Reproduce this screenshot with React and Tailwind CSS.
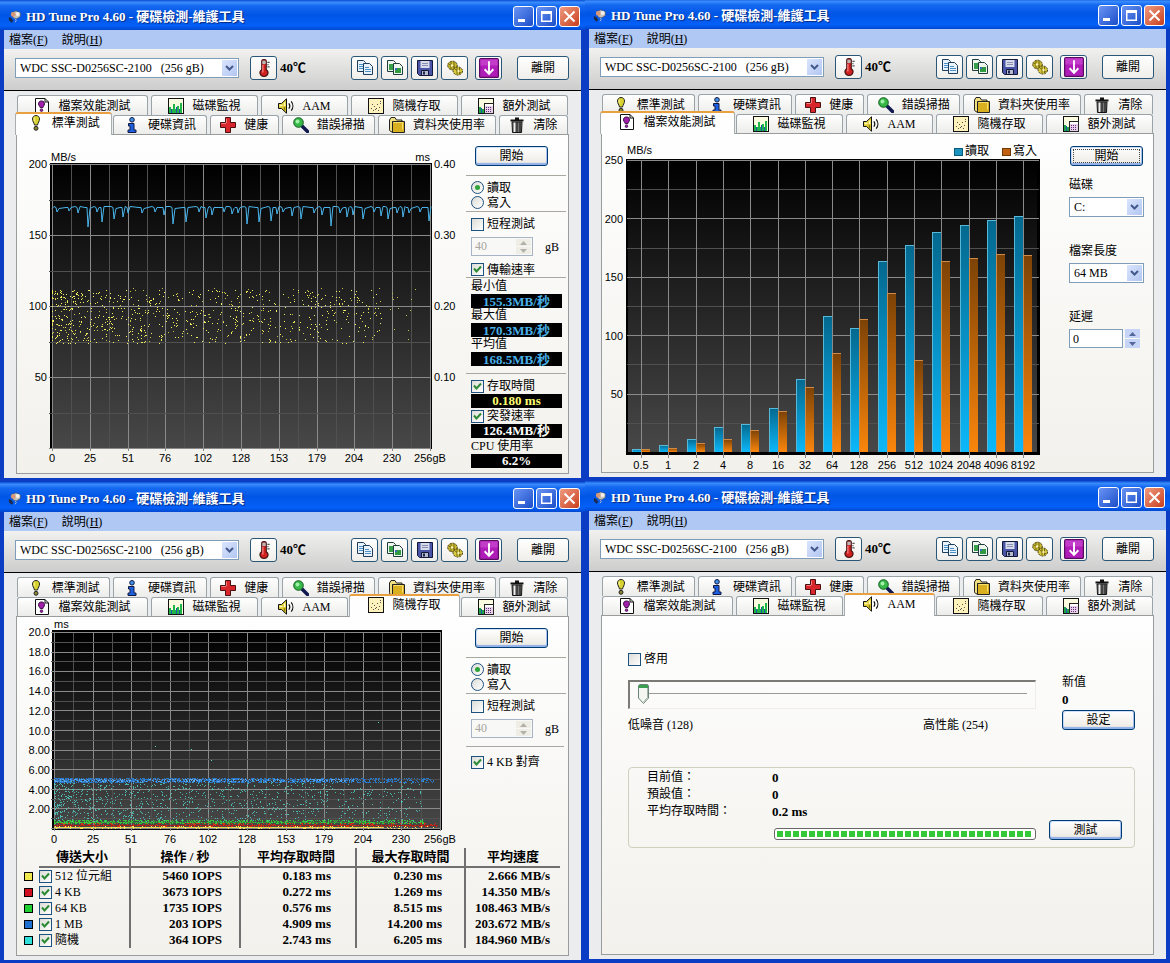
import { useState } from 'react';

const APP_TITLE = 'HD Tune Pro 4.60 - 硬碟檢測-維護工具';
const DRIVE = 'WDC SSC-D0256SC-2100\u00a0\u00a0\u00a0(256 gB)';
const CAPACITY_LABELS = ['0', '25', '51', '76', '102', '128', '153', '179', '204', '230', '256gB'];

// small seeded generator so that the plots look the same on every load
const createRandom = (seed) => {
  let state = seed;
  return () => {
    state = (state + 0x6d2b79f5) | 0;
    let t = Math.imul(state ^ (state >>> 15), 1 | state);
    t = (t + Math.imul(t ^ (t >>> 7), 61 | t)) ^ t;
    return ((t ^ (t >>> 14)) >>> 0) / 4294967296;
  };
};

const scatterPath = ({ seed, count, left, width, top, height, falloff = 1 }) => {
  const random = createRandom(seed);
  let d = '';
  for (let i = 0; i < count; i += 1) {
    const x = Math.floor(left + width * Math.pow(random(), falloff));
    const y = Math.floor(top + height * random());
    d += `M${x} ${y}h1v1h-1z`;
  }
  return d;
};

/* ---------- icons ---------- */

const Icon = ({ children, size = 'size-4' }) => (
  <svg viewBox="0 0 16 16" className={`${size} shrink-0`} aria-hidden="true">
    {children}
  </svg>
);

const BenchmarkIcon = () => (
  <Icon>
    <path d="M8 .5c2.200 0 3.500 1.500 3.500 3.500 0 2.500-1.500 3.500-2 6H6.500c-.5-2.500-2-3.500-2-6C4.500 2 5.800.500 8 .500z" fill="#d8d230" stroke="#222" />
    <path d="M6.500 2.500c-.7 1-.5 2.500.3 4" stroke="#ffffb0" fill="none" />
    <circle cx="8" cy="13.300" r="2" fill="#8a8630" stroke="#222" />
  </Icon>
);

const InfoIcon = () => (
  <Icon>
    <circle cx="8" cy="2.800" r="2.300" fill="#3f8fe8" stroke="#101840" />
    <path d="M4.500 6.500h5.500v6.500h2v2.500h-8V13H6V9H4.500z" fill="#1c5fe0" stroke="#101840" />
  </Icon>
);

const HealthIcon = () => (
  <Icon>
    <path d="M5.500.500h5v5h5v5h-5v5h-5v-5h-5v-5h5z" fill="#d8262c" stroke="#4a1010" />
    <path d="M6.500 6V1.800M1.500 6.500h4.500" stroke="#f58080" />
  </Icon>
);

const ScanIcon = () => (
  <Icon>
    <path d="M9 9l5.500 5.500" stroke="#101850" strokeWidth="3.500" strokeLinecap="round" />
    <circle cx="5.500" cy="5.500" r="4.800" fill="#38b848" stroke="#145c20" />
    <circle cx="4.500" cy="4.500" r="2" fill="#a0f0a8" />
  </Icon>
);

const FolderIcon = () => (
  <Icon>
    <path d="M.5 13.500V3l1.500-2.500h4L7.500 3H13v2" fill="#f0e080" stroke="#222" />
    <path d="M.5 13.500l3 2v-11" fill="#f0e080" stroke="#222" />
    <path d="M3.500 4.500h12v11h-12z" fill="#d8b020" stroke="#222" />
    <path d="M4.500 5.500h9v7" fill="none" stroke="#f8e070" />
  </Icon>
);

const TrashIcon = () => (
  <Icon>
    <path d="M6 1.500h4M1.500 3.500h13" stroke="#111" strokeWidth="2" />
    <path d="M3 5h10l-.5 10.500h-9z" fill="#777" stroke="#111" />
    <path d="M5.500 5.500v9.500" stroke="#eee" strokeWidth="1.500" />
    <path d="M8 5.500v9.500M11 5.500v9.500" stroke="#222" strokeWidth="1.200" />
  </Icon>
);

const FileBenchIcon = () => (
  <Icon>
    <path d="M1.500.500h9.500l3.500 3.500v11.500h-13z" fill="#fff" stroke="#111" />
    <path d="M11 .5V4h3.500" fill="none" stroke="#111" />
    <path d="M7.500 3c2 0 3 1.200 3 2.700 0 1.800-1.200 2.300-1.700 4H6.300c-.5-1.700-1.800-2.200-1.800-4C4.500 4.200 5.500 3 7.500 3z" fill="#a01fa8" stroke="#30083a" />
    <circle cx="7.500" cy="12.200" r="1.300" fill="#a01fa8" stroke="#30083a" strokeWidth=".7" />
  </Icon>
);

const MonitorIcon = () => (
  <Icon>
    <rect x=".5" y=".5" width="15" height="15" fill="#fbfbdf" stroke="#111" />
    <path d="M1 15V9h2v2h2V6h2v5h2V8h2v3h1V5h2v10z" fill="#1fb548" />
    <path d="M3 11h1v4H3zM8 9h1v6H8zM11 11h1v4h-1z" fill="#1e56a8" />
  </Icon>
);

const SpeakerIcon = () => (
  <Icon>
    <path d="M.5 5.500h3L8.500.800v14.400l-5-4.700h-3z" fill="#e0cc30" stroke="#111" />
    <path d="M1.500 7.500h3M6.500 4.500v3.500" stroke="#fffbc0" strokeWidth="1.500" />
    <path d="M6.500 9v3.500" stroke="#8a7a10" strokeWidth="1.500" />
    <path d="M10.800 5.300c1.200 1.600 1.200 3.800 0 5.400M13.200 3.300c2.200 2.700 2.200 6.700 0 9.400" fill="none" stroke="#111" strokeWidth="1.200" />
  </Icon>
);

const RandomIcon = () => (
  <Icon>
    <rect x=".5" y=".5" width="15" height="15" fill="#fdf2bc" stroke="#111" />
    <path d="M3 10h1v1H3zM5 12h1v1H5zM6 8h1v1H6zM8 10h1v1H8zM9 6h1v1H9zM11 9h1v1h-1zM12 5h1v1h-1zM4 6h1v1H4zM12 3h1v1h-1zM10 12h1v1h-1zM7 11h1v1H7z" fill="#555" />
  </Icon>
);

const ExtraIcon = () => (
  <Icon>
    <rect x=".5" y=".5" width="15" height="15" fill="#fbfbdf" stroke="#111" />
    <path d="M1 9h2v6H1zM4 11h2v4H4z" fill="#1fa548" />
    <path d="M3 10h1v5H3z" fill="#1e56a8" />
    <rect x="6.500" y="5.500" width="9" height="10" fill="#e8d0e8" stroke="#222" />
    <path d="M7 6h8v2H7z" fill="#fff" />
    <path d="M8 9h1v1H8zM10 9h1v1h-1zM12 9h1v1h-1zM8 11h1v1H8zM10 11h1v1h-1zM12 11h1v1h-1zM8 13h1v1H8zM10 13h1v1h-1zM12 13h1v1h-1z" fill="#603080" />
  </Icon>
);

const ThermometerIcon = () => (
  <Icon size="size-[18px]">
    <path d="M6 9.500V2c0-2 4-2 4 0v7.500c3 2 1.500 6-2 6s-5-4-2-6z" fill="#d02020" stroke="#401010" />
    <path d="M6.500 1.500h3v3h-3z" fill="#b8b8b8" />
    <path d="M7 5v7" stroke="#ff9090" />
    <path d="M11 3h2M11 5h1M11 7h2" stroke="#555" />
  </Icon>
);

const CopyTextIcon = () => (
  <Icon>
    <path d="M.5.500h6l2 2v9h-8z" fill="#eaf3fb" stroke="#1d3d5c" />
    <path d="M2 4.500h5M2 6.500h5M2 8.500h5" stroke="#4a90c8" />
    <path d="M6.500 3.500h6l3 3v8h-9z" fill="#eaf3fb" stroke="#1d3d5c" />
    <path d="M8 7.500h4M8 9.500h6M8 11.500h6" stroke="#4a90c8" />
  </Icon>
);

const CopyImageIcon = () => (
  <Icon>
    <path d="M.5.500h6l2 2v9h-8z" fill="#eef6ee" stroke="#1d3d3c" />
    <path d="M2 4h4v6H2z" fill="#38a048" />
    <path d="M6.500 3.500h6l3 3v8h-9z" fill="#eef6ee" stroke="#1d3d3c" />
    <path d="M8 8h6v5H8z" fill="#2f9a40" />
    <path d="M8 8h2v2H8z" fill="#3868c0" />
  </Icon>
);

const SaveIcon = () => (
  <Icon>
    <path d="M.5.500h15v15h-13l-2-2z" fill="#4a55a8" stroke="#141838" />
    <path d="M3.500 1h9v7h-9z" fill="#d8dcea" />
    <path d="M5 3.500h6M5 5.500h6" stroke="#8a90b0" />
    <path d="M4.500 10.500h7v5h-7z" fill="#b8bcd0" stroke="#141838" />
    <path d="M6 11.500h2v3H6z" fill="#20264e" />
  </Icon>
);

const OptionsIcon = () => (
  <Icon>
    <ellipse cx="5.500" cy="5.500" rx="4.800" ry="4.300" fill="#c8b830" stroke="#3a3408" strokeDasharray="2 1" />
    <path d="M1.500 4L9 8M4 1v9M7 2v8" stroke="#756a14" />
    <ellipse cx="10.800" cy="11" rx="4.700" ry="4" fill="#d8c83c" stroke="#3a3408" strokeDasharray="2 1" />
    <path d="M8 9l6 4M10 8v6M12.500 8v6" stroke="#756a14" />
    <circle cx="5" cy="5.500" r="1.200" fill="#fff6b0" />
    <circle cx="11.500" cy="11" r="1.200" fill="#fff6b0" />
  </Icon>
);

const UpdateIcon = () => (
  <Icon size="size-5">
    <rect x=".5" y=".5" width="15" height="15" rx="1" fill="#b01cb8" stroke="#5a0a60" />
    <path d="M1 1h14v5H1z" fill="#cf50d4" opacity=".6" />
    <path d="M8 2.500v10M4.500 9L8 12.700 11.500 9" fill="none" stroke="#fff" strokeWidth="1.500" />
  </Icon>
);

const AppIcon = () => (
  <Icon size="size-3.5">
    <path d="M4 3l5-2 5 2v4.500l-4 2.500-4-1z" fill="#c8c4bc" stroke="#555" strokeWidth=".6" />
    <circle cx="11" cy="4.500" r="2.300" fill="#f4f0ea" />
    <circle cx="6" cy="5" r="2.700" fill="#d89878" />
    <path d="M1 8l3 1.500 2 3-2 2-3-3z" fill="#1a2a48" />
    <path d="M8 10l1.500 2-1.500 2" stroke="#c8c8c8" fill="none" />
  </Icon>
);

/* ---------- controls ---------- */

const Chevron = () => (
  <svg viewBox="0 0 9 6" className="h-1.5 w-[9px]" aria-hidden="true">
    <path d="M1 1l3.500 3.500L8 1" fill="none" stroke="#43598c" strokeWidth="2" />
  </svg>
);

const Select = ({ label, options, className }) => (
  <div className={`relative ${className}`}>
    <select
      aria-label={label}
      className="h-full w-full appearance-none border border-[#7f9db9] bg-white pl-1 text-black outline-none"
    >
      {options.map((option) => (
        <option key={option}>{option}</option>
      ))}
    </select>
    <span className="pointer-events-none absolute inset-y-0.5 right-0.5 flex w-[15px] items-center justify-center bg-linear-to-br from-[#dbe5fd] to-[#b2c6f2]">
      <Chevron />
    </span>
  </div>
);

const Button = ({ children, focused = false }) => (
  <button
    type="button"
    className={`flex h-5 w-[73px] items-center justify-center rounded-[3px] border border-[#003c74] bg-linear-to-b from-white to-[#ece9e2] shadow-[inset_0_-2px_1px_#8fb0e8,inset_1px_1px_0_#cfe0fb,inset_-1px_0_0_#a8c2ef] ${focused ? 'outline-1 -outline-offset-4 outline-dotted outline-[#444]' : ''}`}
  >
    {children}
  </button>
);

const ToolButton = ({ label, children }) => (
  <button
    type="button"
    aria-label={label}
    className="flex h-6 w-[27px] items-center justify-center rounded-[3px] border border-[#2a5678] bg-linear-to-b from-white to-[#efeeea]"
  >
    {children}
  </button>
);

const Checkbox = ({ label, defaultChecked = false }) => (
  <label className="flex items-center gap-[3px] whitespace-nowrap">
    <span className="relative size-[13px] shrink-0">
      <input
        type="checkbox"
        defaultChecked={defaultChecked}
        className="peer block size-[13px] appearance-none border border-[#1c5180] bg-linear-to-br from-[#dcdcd7] to-white"
      />
      <svg viewBox="0 0 13 13" className="pointer-events-none absolute inset-0 hidden size-[13px] peer-checked:block" aria-hidden="true">
        <path d="M3 5.500l2.500 3L10 3.500" fill="none" stroke="#2c8a34" strokeWidth="2" />
      </svg>
    </span>
    {label}
  </label>
);

const Radio = ({ name, label, defaultChecked = false }) => (
  <label className="flex h-[15px] items-center gap-[3px]">
    <span className="relative size-[13px] shrink-0">
      <input
        type="radio"
        name={name}
        defaultChecked={defaultChecked}
        className="peer block size-[13px] appearance-none rounded-full border border-[#1c5180] bg-linear-to-br from-[#dcdcd7] to-white"
      />
      <span className="pointer-events-none absolute inset-1 hidden rounded-full bg-[#2fa43a] peer-checked:block" />
    </span>
    {label}
  </label>
);

const SpinArrows = ({ className, disabled = false }) => (
  <span className={`flex w-[15px] flex-col gap-px ${className}`}>
    <button type="button" disabled={disabled} aria-label="Up" className="flex flex-1 items-center justify-center bg-[#c6d4f8] disabled:bg-[#eeede6]">
      <svg viewBox="0 0 7 4" className="h-1 w-[7px]">
        <path d="M0 4l3.500-4L7 4z" fill="currentColor" />
      </svg>
    </button>
    <button type="button" disabled={disabled} aria-label="Down" className="flex flex-1 items-center justify-center bg-[#c6d4f8] disabled:bg-[#eeede6]">
      <svg viewBox="0 0 7 4" className="h-1 w-[7px]">
        <path d="M0 0l3.500 4L7 0z" fill="currentColor" />
      </svg>
    </button>
  </span>
);

const Rule = ({ className = '' }) => <hr className={`border-t border-[#a9a8a0] ${className}`} />;

/* ---------- window frame ---------- */

const BASIC_TABS = [
  { id: 'benchmark', label: '標準測試', icon: BenchmarkIcon },
  { id: 'info', label: '硬碟資訊', icon: InfoIcon },
  { id: 'health', label: '健康', icon: HealthIcon },
  { id: 'scan', label: '錯誤掃描', icon: ScanIcon },
  { id: 'folder', label: '資料夾使用率', icon: FolderIcon },
  { id: 'erase', label: '清除', icon: TrashIcon },
];

const EXTRA_TABS = [
  { id: 'file', label: '檔案效能測試', icon: FileBenchIcon },
  { id: 'monitor', label: '磁碟監視', icon: MonitorIcon },
  { id: 'aam', label: 'AAM', icon: SpeakerIcon },
  { id: 'random', label: '隨機存取', icon: RandomIcon },
  { id: 'extra', label: '額外測試', icon: ExtraIcon },
];

const TabRow = ({ tabs, active, height }) => (
  <div role="tablist" className={`flex gap-[3px] ${height}`}>
    {tabs.map(({ id, label, icon: TabIcon }) => {
      const selected = id === active;
      return (
        <button
          key={id}
          type="button"
          role="tab"
          aria-selected={selected}
          className={
            selected
              ? "relative isolate z-10 flex flex-auto items-center justify-center gap-2 px-px pb-1 before:absolute before:-inset-x-0.5 before:-top-[3px] before:-bottom-px before:-z-10 before:rounded-t-[3px] before:border-x before:border-t-2 before:border-x-[#a8aeb0] before:border-t-[#e8a040] before:bg-[#fefefe] before:content-['']"
              : 'flex flex-auto items-center justify-center gap-2 rounded-t-[3px] border-x border-t border-[#9aa4a8] bg-linear-to-b from-white to-[#ececea]'
          }
        >
          <TabIcon />
          {label}
        </button>
      );
    })}
  </div>
);

const CaptionButton = ({ label, close = false, children }) => (
  <button
    type="button"
    aria-label={label}
    className={`size-[21px] rounded-[3px] border border-white ${close ? 'bg-linear-to-br from-[#ee9a80] to-[#c83c18]' : 'bg-linear-to-br from-[#6a94f4] to-[#1a4cc8]'}`}
  >
    <svg viewBox="0 0 19 19" className="size-[19px]">
      {children}
    </svg>
  </button>
);

const Window = ({ active, children }) => {
  const rows = BASIC_TABS.some((tab) => tab.id === active) ? [EXTRA_TABS, BASIC_TABS] : [BASIC_TABS, EXTRA_TABS];

  return (
    <section className="flex flex-col bg-[#0a3cc4]">
      <header className="flex h-[30px] items-center bg-[linear-gradient(#0a4fd6_0%,#3a8cfc_8%,#1468f0_20%,#0055e5_50%,#0460f8_85%,#0048d0_100%)] pt-[3px] pr-[5px] pl-2">
        <AppIcon />
        <h2 className="ml-1 text-[13px] font-bold whitespace-nowrap text-white [text-shadow:1px_1px_1px_#06287c]">{APP_TITLE}</h2>
        <div className="ml-auto flex gap-0.5">
          <CaptionButton label="Minimize">
            <path d="M4 12h7v3H4z" fill="#fff" />
          </CaptionButton>
          <CaptionButton label="Maximize">
            <path d="M4 4h11v11H4zM5.500 7v6.500h8V7z" fill="#fff" fillRule="evenodd" />
          </CaptionButton>
          <CaptionButton label="Close" close>
            <path d="M4.500 4.500l10 10M14.500 4.500l-10 10" stroke="#fff" strokeWidth="2" />
          </CaptionButton>
        </div>
      </header>

      <div className="mx-1 mb-1 flex-1 bg-[#ebecee]">
        <nav className="flex h-[19px] items-center gap-3.5 bg-[#b0c8f4] pl-[5px]">
          <a href="#file">
            檔案(<u>F</u>)
          </a>
          <a href="#help">
            說明(<u>H</u>)
          </a>
        </nav>

        <div className="flex h-[42px] items-center border-b border-black bg-linear-to-b from-[#f1f1ef] to-[#cdcdcd] pr-3 pb-[3px] pl-[11px]">
          <Select label="Drive" options={[DRIVE]} className="h-5 w-56" />
          <div className="ml-[11px] flex items-center gap-[3px]">
            <ToolButton label="Temperature">
              <ThermometerIcon />
            </ToolButton>
            <span className="text-[13px] font-bold">40℃</span>
          </div>
          <div className="ml-auto flex gap-[3px]">
            <ToolButton label="Copy text">
              <CopyTextIcon />
            </ToolButton>
            <ToolButton label="Copy screenshot">
              <CopyImageIcon />
            </ToolButton>
            <ToolButton label="Save">
              <SaveIcon />
            </ToolButton>
            <ToolButton label="Options">
              <OptionsIcon />
            </ToolButton>
          </div>
          <div className="ml-[7px] flex gap-[15px]">
            <ToolButton label="Update">
              <UpdateIcon />
            </ToolButton>
            <button
              type="button"
              className="h-6 w-[52px] rounded-[3px] border border-[#2a5678] bg-linear-to-b from-white to-[#efeeea]"
            >
              離開
            </button>
          </div>
        </div>

        <div className="px-3 pt-1 pb-1">
          <div className="px-px">
            <TabRow tabs={rows[0]} active={active} height="h-5" />
            <TabRow tabs={rows[1]} active={active} height="h-[19px]" />
          </div>
          <div className="min-h-[340px] border border-[#989c9c] bg-linear-to-b from-[#fefefe] to-[#f2f1ec]">{children}</div>
        </div>
      </div>
    </section>
  );
};

/* ---------- charts ---------- */

const PlotGradient = ({ id }) => (
  <linearGradient id={id} x1="0" y1="0" x2="0" y2="1">
    <stop offset="0" stopColor="#000" />
    <stop offset="1" stopColor="#484848" />
  </linearGradient>
);

const Grid = ({ left, top, width, height, columns, rows }) => (
  <g shapeRendering="crispEdges">
    {Array.from({ length: columns * 2 + 1 }, (_, i) => {
      const x = Math.round(left + (width * i) / (columns * 2)) + 0.5;
      return <path key={`c${i}`} d={`M${x} ${top}v${height + (i % 2 ? 0 : 3)}`} stroke={i % 2 ? '#505050' : '#8a8a8a'} />;
    })}
    {Array.from({ length: rows * 2 + 1 }, (_, i) => {
      const y = Math.round(top + (height * i) / (rows * 2)) + 0.5;
      return <path key={`r${i}`} d={`M${left - 3} ${y}h${width + 3}`} stroke={i % 2 ? '#505050' : '#8a8a8a'} />;
    })}
  </g>
);

const DIPS = [
  [5, 5], [17, 4], [26, 6], [36, 20], [45, 5], [50, 15], [62, 12], [71, 10], [76, 6], [90, 6], [103, 5], [112, 8],
  [121, 17], [134, 15], [147, 5], [154, 11], [160, 8], [172, 5], [180, 7], [186, 6], [195, 17], [207, 15], [219, 14],
  [225, 7], [231, 5], [240, 9], [249, 12], [262, 6], [270, 8], [279, 19], [288, 6], [295, 10], [301, 8], [311, 12],
  [322, 5], [329, 9], [336, 12], [345, 6], [351, 10], [357, 6], [368, 5], [377, 14],
];

const transferPath = () => {
  let d = 'M35 61.500';
  DIPS.forEach(([x, depth], i) => {
    const px = 35 + x;
    d += `L${px - 3} ${59.5 + (i % 2)}L${px - 1} ${60.5}L${px} ${60 + depth}L${px + 2} ${61.5 - (i % 3)}`;
  });
  return d;
};

const TransferChart = () => (
  <svg viewBox="0 0 446 324" className="h-[324px] w-[446px] shrink-0 font-['Liberation_Sans',sans-serif] text-[11px]" role="img">
    <defs>
      <PlotGradient id="transferPlot" />
    </defs>
    <rect x="33" y="16" width="382" height="286" fill="#000" />
    <rect x="35" y="17" width="379" height="284" fill="url(#transferPlot)" />
    <Grid left={35} top={17} width={378} height={284} columns={10} rows={4} />
    <path d={scatterPath({ seed: 11, count: 660, left: 35, width: 330, top: 143, height: 54, falloff: 1.5 })} fill="#f4f060" />
    <path d={scatterPath({ seed: 23, count: 200, left: 35, width: 366, top: 141, height: 54, falloff: 1.2 })} fill="#c4c048" />
    <path d={transferPath()} fill="none" stroke="#4ab4ea" />
    <text x="34" y="14">MB/s</text>
    <text x="413" y="14" textAnchor="end">ms</text>
    {['200', '150', '100', '50'].map((label, i) => (
      <text key={label} x="30" y={21 + 71 * i} textAnchor="end">
        {label}
      </text>
    ))}
    {['0.40', '0.30', '0.20', '0.10'].map((label, i) => (
      <text key={label} x="417" y={21 + 71 * i}>
        {label}
      </text>
    ))}
    {CAPACITY_LABELS.map((label, i) => (
      <text key={label} x={35 + Math.round(37.8 * i)} y="315" textAnchor="middle">
        {label}
      </text>
    ))}
  </svg>
);

const BLOCK_RESULTS = [
  { size: '0.5', read: 3, write: 3 },
  { size: '1', read: 7, write: 4 },
  { size: '2', read: 13, write: 9 },
  { size: '4', read: 25, write: 13 },
  { size: '8', read: 28, write: 22 },
  { size: '16', read: 44, write: 41 },
  { size: '32', read: 73, write: 65 },
  { size: '64', read: 136, write: 99 },
  { size: '128', read: 124, write: 133 },
  { size: '256', read: 191, write: 159 },
  { size: '512', read: 207, write: 92 },
  { size: '1024', read: 220, write: 191 },
  { size: '2048', read: 227, write: 194 },
  { size: '4096', read: 232, write: 198 },
  { size: '8192', read: 236, write: 197 },
];

const Bar = ({ x, height, fill, edge }) => (
  <g shapeRendering="crispEdges">
    <rect x={x} y={318 - height} width="9" height={height} fill={`url(#${fill})`} />
    <path d={`M${x + 0.5} 318v-${height - 0.5}h8`} fill="none" stroke={edge} />
  </g>
);

const FileChart = () => (
  <svg viewBox="0 0 446 338" className="h-[338px] w-[446px] shrink-0 font-['Liberation_Sans',sans-serif] text-[11px]" role="img">
    <defs>
      <PlotGradient id="filePlot" />
      <linearGradient id="readBar" x1="0" y1="0" x2="0" y2="1">
        <stop offset="0" stopColor="#04688e" />
        <stop offset="1" stopColor="#0cb8fa" />
      </linearGradient>
      <linearGradient id="writeBar" x1="0" y1="0" x2="0" y2="1">
        <stop offset="0" stopColor="#7c4206" />
        <stop offset="1" stopColor="#fb860c" />
      </linearGradient>
    </defs>
    <rect x="24" y="25" width="414" height="296" fill="#000" />
    <rect x="26" y="27" width="409" height="291" fill="url(#filePlot)" />
    <g shapeRendering="crispEdges">
      {Array.from({ length: 10 }, (_, i) => {
        const y = Math.round(26 + 29.2 * i) + 0.5;
        return <path key={i} d={`M25 ${y}h412`} stroke={i % 2 ? '#505050' : '#8a8a8a'} />;
      })}
      {BLOCK_RESULTS.map(({ size }, i) => (
        <path key={size} d={`M${Math.round(39 + 27.3 * i) + 0.5} 27v297`} stroke="#8a8a8a" />
      ))}
    </g>
    {BLOCK_RESULTS.map(({ size, read, write }, i) => {
      const x = Math.round(39 + 27.3 * i);
      return (
        <g key={size}>
          <Bar x={x - 9} height={read} fill="readBar" edge="#58b8d8" />
          <Bar x={x} height={write} fill="writeBar" edge="#d08a48" />
          <text x={x} y="335" textAnchor="middle">
            {size}
          </text>
        </g>
      );
    })}
    <text x="25" y="20">MB/s</text>
    {['250', '200', '150', '100', '50'].map((label, i) => (
      <text key={label} x="21" y={30 + Math.round(58.5 * i)} textAnchor="end">
        {label}
      </text>
    ))}
    <rect x="352.500" y="14.500" width="8" height="7" fill="#1c94c0" stroke="#0a5878" />
    <rect x="400.500" y="14.500" width="8" height="7" fill="#c06010" stroke="#6e3808" />
    <g className="font-['Noto_Sans_CJK_TC',sans-serif] text-xs">
      <text x="363" y="21">讀取</text>
      <text x="411" y="21">寫入</text>
    </g>
  </svg>
);

const RandomChart = () => (
  <svg viewBox="0 0 446 231" className="h-[231px] w-[446px] shrink-0 font-['Liberation_Sans',sans-serif] text-[11px]" role="img">
    <defs>
      <PlotGradient id="randomPlot" />
    </defs>
    <rect x="35" y="13" width="390" height="200" fill="#000" />
    <rect x="37" y="14" width="386" height="197" fill="url(#randomPlot)" />
    <Grid left={37} top={15} width={386} height={196} columns={10} rows={10} />
    <path d={scatterPath({ seed: 5, count: 1150, left: 37, width: 370, top: 164, height: 42, falloff: 1.5 })} fill="#4fd8cc" opacity=".8" />
    <path d={scatterPath({ seed: 7, count: 1500, left: 37, width: 380, top: 161, height: 5, falloff: 1.4 })} fill="#2c78c8" />
    <path d={scatterPath({ seed: 17, count: 300, left: 37, width: 300, top: 162, height: 3, falloff: 1.3 })} fill="#58a8f0" />
    <path d="M37 205.500h340" stroke="#2f8a34" />
    <path d={scatterPath({ seed: 9, count: 700, left: 37, width: 370, top: 203, height: 4, falloff: 1.2 })} fill="#38c840" />
    <path d="M37 208.500h384" stroke="#a02018" />
    <path d={scatterPath({ seed: 13, count: 400, left: 37, width: 384, top: 206, height: 4 })} fill="#d83018" />
    <path d="M37 210.500h330" stroke="#e8d850" />
    <path d={scatterPath({ seed: 31, count: 160, left: 37, width: 384, top: 209, height: 3 })} fill="#ffe860" />
    <path d="M138 129h1v1h-1zM174 132h1v1h-1zM194 143h1v1h-1zM361 105h1v1h-1z" fill="#4fd8cc" />
    <text x="37" y="11">ms</text>
    {['20.0', '18.0', '16.0', '14.0', '12.0', '10.0', '8.00', '6.00', '4.00', '2.00'].map((label, i) => (
      <text key={label} x="33" y={19 + Math.round(19.7 * i)} textAnchor="end">
        {label}
      </text>
    ))}
    {CAPACITY_LABELS.map((label, i) => (
      <text key={label} x={37 + Math.round(38.6 * i)} y="226" textAnchor="middle">
        {label}
      </text>
    ))}
  </svg>
);

/* ---------- pages ---------- */

// start button, read/write choice and short stroke, shared by the two drive tests
const TestOptions = ({ name, children }) => (
  <div className="mr-0.5 ml-[3px] flex-1 pt-[11px]">
    <div className="pl-[9px]">
      <Button>開始</Button>
    </div>
    <Rule className="mt-[9px]" />
    <div className="mt-1 pl-[5px]">
      <Radio name={name} label="讀取" defaultChecked />
      <Radio name={name} label="寫入" />
    </div>
    <Rule className="mt-px" />
    <div className="mt-1 pl-[5px]">
      <Checkbox label="短程測試" />
      <div className="mt-[5px] flex items-center gap-3">
        <span className="relative">
          <input
            type="text"
            aria-label="短程測試 gB"
            disabled
            defaultValue="40"
            className="block h-[19px] w-[62px] border border-[#a8b4c4] bg-[#f8f8f6] pl-[3px] text-[#a8a69c]"
          />
          <SpinArrows disabled className="absolute inset-y-0.5 right-0.5 text-[#b4b2a8]" />
        </span>
        gB
      </div>
    </div>
    {children}
  </div>
);

const Reading = ({ children, color = 'text-white' }) => (
  <output className={`mr-1 flex h-3.5 items-center justify-center bg-black text-[13px] font-bold whitespace-nowrap ${color}`}>
    {children}
  </output>
);

const BenchmarkPage = () => (
  <div className="flex items-end">
    <TransferChart />
    <div className="flex flex-1">
      <TestOptions name="benchmarkMode">
        <div className="mt-1.5 flex h-[15px] items-center pl-[5px]">
          <Checkbox label="傳輸速率" defaultChecked />
        </div>
        <Rule />
        <div className="pt-px pl-[5px] leading-[15px]">
          <p>最小值</p>
          <Reading color="text-[#48b0e8]">155.3MB/秒</Reading>
          <p>最大值</p>
          <Reading color="text-[#48b0e8]">170.3MB/秒</Reading>
          <p>平均值</p>
          <Reading color="text-[#48b0e8]">168.5MB/秒</Reading>
        </div>
        <Rule className="mt-[7px]" />
        <div className="mt-1 pl-[5px]">
          <Checkbox label="存取時間" defaultChecked />
          <Reading color="text-[#ffff70]">0.180 ms</Reading>
          <Checkbox label="突發速率" defaultChecked />
          <Reading>126.4MB/秒</Reading>
          <p>CPU 使用率</p>
          <Reading>6.2%</Reading>
        </div>
        <div className="h-[3px]" />
      </TestOptions>
    </div>
  </div>
);

const FilePage = () => (
  <div className="flex">
    <FileChart />
    <div className="flex flex-col gap-[26px] pt-3 pl-[21px]">
      <div className="pl-px">
        <Button focused>開始</Button>
      </div>
      <div className="-mt-[15px]">
        <p>磁碟</p>
        <Select label="磁碟" options={['C:']} className="mt-1 h-5 w-[75px]" />
      </div>
      <div>
        <p>檔案長度</p>
        <Select label="檔案長度" options={['64 MB']} className="mt-1 h-5 w-[75px]" />
      </div>
      <div>
        <label htmlFor="delay">延遲</label>
        <div className="mt-1 flex h-[19px] gap-0.5">
          <input id="delay" type="text" defaultValue="0" className="w-[54px] border border-[#7f9db9] bg-white pl-[3px] outline-none" />
          <SpinArrows className="text-[#54689c]" />
        </div>
      </div>
    </div>
  </div>
);

const ACCESS_RESULTS = [
  { name: '512 位元組', color: 'bg-[#f0e84c]', iops: '5460 IOPS', average: '0.183 ms', max: '0.230 ms', speed: '2.666 MB/s' },
  { name: '4 KB', color: 'bg-[#d01020]', iops: '3673 IOPS', average: '0.272 ms', max: '1.269 ms', speed: '14.350 MB/s' },
  { name: '64 KB', color: 'bg-[#20d030]', iops: '1735 IOPS', average: '0.576 ms', max: '8.515 ms', speed: '108.463 MB/s' },
  { name: '1 MB', color: 'bg-[#2070d0]', iops: '203 IOPS', average: '4.909 ms', max: '14.200 ms', speed: '203.672 MB/s' },
  { name: '隨機', color: 'bg-[#30e0d8]', iops: '364 IOPS', average: '2.743 ms', max: '6.205 ms', speed: '184.960 MB/s' },
];

const RandomPage = () => (
  <>
    <div className="flex">
      <RandomChart />
      <TestOptions name="randomMode">
        <Rule className="mt-2 mr-0.5" />
        <div className="mt-[7px] pl-[5px]">
          <Checkbox label="4 KB 對齊" defaultChecked />
        </div>
      </TestOptions>
    </div>
    <table className="mr-2 ml-[7px] w-[536px] table-fixed border-separate border-spacing-0 text-[13px] font-bold">
      <colgroup>
        <col className="w-[15px]" />
        <col className="w-[90px]" />
        <col className="w-[110px]" />
        <col className="w-[116px]" />
        <col className="w-[109px]" />
        <col />
      </colgroup>
      <thead>
        <tr className="h-5 [&>th]:border-[#707070]">
          <td />
          <th className="border-b-2 pr-1">傳送大小</th>
          <th className="border-b-2 border-l-2">操作 / 秒</th>
          <th className="border-b-2 border-l-2 pr-1">平均存取時間</th>
          <th className="border-b-2 border-l-2">最大存取時間</th>
          <th className="border-b-2 border-l-2">平均速度</th>
        </tr>
      </thead>
      <tbody>
        {ACCESS_RESULTS.map((row) => (
          <tr key={row.name} className="h-4 text-right [&>td]:border-[#707070]">
            <td className="align-middle">
              <span className={`block size-[9px] border border-black ${row.color}`} />
            </td>
            <td className="text-xs font-normal">
              <Checkbox label={row.name} defaultChecked />
            </td>
            <td className="border-l-2 pr-[17px]">{row.iops}</td>
            <td className="border-l-2 pr-6">{row.average}</td>
            <td className="border-l-2 pr-[22px]">{row.max}</td>
            <td className="border-l-2 pr-2.5">{row.speed}</td>
          </tr>
        ))}
      </tbody>
    </table>
  </>
);

const AamPage = () => {
  const [level, setLevel] = useState(128);
  const position = (level - 128) / 126;

  return (
    <div className="pt-[35px] pr-[18px] pl-[26px]">
      <Checkbox label="啓用" />
      <div className="mt-[7px] flex gap-[26px]">
        <div className="flex-1 pt-1.5">
          <div className="h-[29px] border-t-2 border-r border-b border-l-2 border-t-[#7c7a74] border-r-[#eeede8] border-b-[#eeede8] border-l-[#7c7a74] px-2 pt-0.5">
            <div className="relative">
              <input
                type="range"
                aria-label="AAM"
                min="128"
                max="254"
                value={level}
                onChange={(e) => setLevel(Number(e.target.value))}
                className="block h-5 w-full appearance-none bg-[linear-gradient(#9a9a98,#9a9a98)] bg-[length:100%_1px] bg-[position:0_9px] bg-no-repeat [&::-webkit-slider-thumb]:h-5 [&::-webkit-slider-thumb]:w-[11px] [&::-webkit-slider-thumb]:appearance-none"
              />
              <svg
                viewBox="0 0 11 20"
                className="pointer-events-none absolute top-0 h-5 w-[11px]"
                style={{ left: `calc(${position * 100}% - ${position * 11}px)` }}
                aria-hidden="true"
              >
                <path d="M.5 1.500l1-1h8l1 1V14l-5 5.500-5-5.500z" fill="#f4f6f2" stroke="#6a8478" />
                <path d="M1 1h9v3H1z" fill="#3aa050" />
                <path d="M9.500 4v9.500l-4 4.500" fill="none" stroke="#a8b4ac" />
              </svg>
            </div>
          </div>
          <div className="mt-2 flex justify-between pr-12">
            <span>低噪音 (128)</span>
            <span>高性能 (254)</span>
          </div>
        </div>
        <div>
          <p>新值</p>
          <p className="mt-0.5 text-[13px] font-bold">0</p>
          <div className="mt-0.5">
            <Button>設定</Button>
          </div>
        </div>
      </div>

      <div className="mt-[34px] h-[81px] rounded border border-[#d0d0bf] pt-px">
        <dl className="grid grid-cols-[125px_auto] pl-[18px] leading-[17px]">
          <dt>目前值：</dt>
          <dd className="text-[13px] font-bold">0</dd>
          <dt>預設值：</dt>
          <dd className="text-[13px] font-bold">0</dd>
          <dt>平均存取時間：</dt>
          <dd className="text-[13px] font-bold">0.2 ms</dd>
        </dl>
        <div className="flex items-end gap-[13px] pr-3 pl-[145px]">
          <progress
            aria-label="測試"
            max="100"
            value="100"
            className="block h-3 flex-1 appearance-none overflow-hidden rounded-[3px] border border-[#686868] bg-white p-0.5 [&::-webkit-progress-bar]:bg-white [&::-webkit-progress-value]:bg-[repeating-linear-gradient(90deg,#34c838_0_6px,#fff_6px_8px)]"
          />
          <Button>測試</Button>
        </div>
      </div>
    </div>
  );
};

export default function App() {
  return (
    <main className="grid h-screen grid-cols-2 items-start overflow-hidden bg-[#0a3cc4] font-['Liberation_Serif','Noto_Sans_CJK_TC',serif] text-xs/4 text-black">
      <div>
        <Window active="benchmark">
          <BenchmarkPage />
        </Window>
        <Window active="random">
          <RandomPage />
        </Window>
      </div>
      <div className="-mt-px">
        <Window active="file">
          <FilePage />
        </Window>
        <Window active="aam">
          <AamPage />
        </Window>
      </div>
    </main>
  );
}
